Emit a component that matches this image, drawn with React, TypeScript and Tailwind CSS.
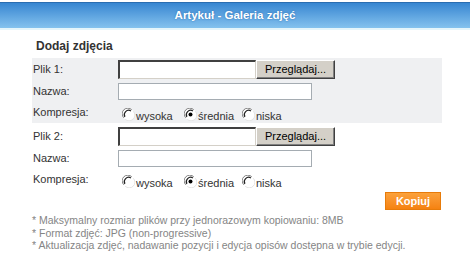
import React from 'react';

function Radio({ checked }: { checked?: boolean }) {
  return (
    <svg width="13" height="13" viewBox="0 0 13 13" className="shrink-0">
      <circle cx="6.5" cy="6.5" r="6" fill="#ffffff" />
      <path d="M1.8 9.8 A5.6 5.6 0 0 1 9.8 1.8" stroke="#808080" strokeWidth="1" fill="none" />
      <path d="M2.9 8.9 A4.4 4.4 0 0 1 8.9 2.9" stroke="#222" strokeWidth="1.2" fill="none" />
      <path d="M11.2 3.2 A5.6 5.6 0 0 1 3.2 11.2" stroke="#e4e4e4" strokeWidth="1" fill="none" />
      {checked && <circle cx="6.5" cy="6.5" r="2" fill="#000000" />}
    </svg>
  );
}

function FileField() {
  return (
    <div className="flex items-center">
      <div className="h-[19px] w-[138px] border-t-2 border-l-2 border-b border-r border-t-[#404040] border-l-[#404040] border-b-[#d4d0c8] border-r-[#d4d0c8] bg-white" />
      <button className="h-[19px] w-[79px] border border-t-white border-l-white border-b-[#404040] border-r-[#404040] bg-[#d4d0c8] text-[11px] leading-none text-black shadow-[inset_-1px_-1px_0_#808080]">
        Przeglądaj...
      </button>
    </div>
  );
}

function Compression() {
  const opts = [
    { label: 'wysoka', checked: false, w: 'w-[62px]' },
    { label: 'średnia', checked: true, w: 'w-[58px]' },
    { label: 'niska', checked: false, w: 'w-[50px]' },
  ];
  return (
    <div className="flex items-center pl-[4px] pt-[4px]">
      {opts.map((o) => (
        <label key={o.label} className={`flex items-center gap-[1px] ${o.w}`}>
          <Radio checked={o.checked} />
          <span className="pt-[3px] text-[11px] text-[#333]">{o.label}</span>
        </label>
      ))}
    </div>
  );
}

function Group({ n, shaded }: { n: number; shaded?: boolean }) {
  return (
    <div className={shaded ? 'bg-[#eff0f2]' : 'bg-white'}>
      <div className="flex h-[23px] items-center">
        <div className="w-[86px] pl-[1px] text-[11px] text-[#333]">Plik {n}:</div>
        <FileField />
      </div>
      <div className="flex h-[21px] items-center">
        <div className="w-[86px] pl-[1px] text-[11px] text-[#333]">Nazwa:</div>
        <div className="h-[17px] w-[194px] border border-[#a5acb2] bg-white" />
      </div>
      <div className="flex h-[21px] items-center">
        <div className="w-[86px] pl-[1px] text-[11px] text-[#333]">Kompresja:</div>
        <Compression />
      </div>
    </div>
  );
}

export default function App() {
  return (
    <div className="h-[263px] w-[470px] bg-white pt-[2px] font-['Liberation_Sans',Arial,sans-serif]">
      <div className="flex h-[26px] items-center justify-center border-t border-[#2a6db0] bg-gradient-to-b from-[#3686d1] to-[#84c2ee] text-[11.5px] font-bold text-white [text-shadow:0_0_2px_#2a6db0]">
        Artykuł - Galeria zdjęć
      </div>
      <div className="h-[2px] bg-[#e4f5fb]" />

      <div className="w-[410px] ml-[32px]">
        <div className="pl-[4px] pt-[9px] pb-[4px] text-[12px] font-bold leading-[15px] text-[#333]">
          Dodaj zdjęcia
        </div>
        <Group n={1} shaded />
        <div className="h-[2px]" />
        <Group n={2} />
        <div className="flex h-[22px] items-center justify-end pr-[1px]">
          <button className="h-[18px] w-[56px] border border-[#e77b0a] bg-gradient-to-b from-[#fba13a] to-[#f5820f] text-[11px] font-bold leading-none text-white">
            Kopiuj
          </button>
        </div>
        <div className="pt-[2px] text-[10.5px] leading-[12.5px] text-[#858585]">
          <div>* Maksymalny rozmiar plików przy jednorazowym kopiowaniu: 8MB</div>
          <div>* Format zdjęć: JPG (non-progressive)</div>
          <div>* Aktualizacja zdjęć, nadawanie pozycji i edycja opisów dostępna w trybie edycji.</div>
        </div>
      </div>
    </div>
  );
}
